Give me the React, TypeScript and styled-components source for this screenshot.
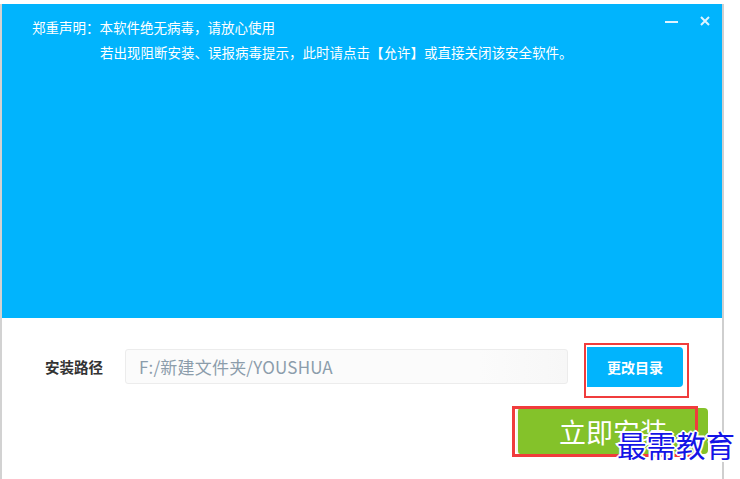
import React from 'react';
import styled, { createGlobalStyle } from 'styled-components';

const GlobalStyle = createGlobalStyle`
  html, body {
    margin: 0;
    padding: 0;
    background: #ffffff;
  }
  body {
    font-family: "Noto Sans CJK SC", "Noto Sans", sans-serif;
  }
`;

const Page = styled.div`
  position: relative;
  width: 740px;
  height: 479px;
  padding-top: 4px;
  box-sizing: border-box;
  overflow: hidden;
  background: #ffffff;
`;

const Window = styled.div`
  width: 724px;
  height: 475px;
  box-sizing: border-box;
  border-left: 2px solid #d2d2d2;
  border-right: 2px solid #cfcfcf;
  display: flex;
  flex-direction: column;
`;

const Header = styled.div`
  height: 314px;
  background: #01b4fd;
  display: flex;
  align-items: flex-start;
`;

const Notice = styled.div`
  flex: 1;
  padding: 11px 0 0 30px;
  color: #ffffff;
  font-size: 13.5px;
  line-height: 25px;
`;

const NoticeLine = styled.div<{ indent?: boolean }>`
  white-space: nowrap;
  padding-left: ${(props) => (props.indent ? '68px' : '0')};
`;

const WindowControls = styled.div`
  display: flex;
  align-items: center;
  gap: 20px;
  padding: 10px 11px 0 0;
`;

const ControlButton = styled.div`
  width: 13px;
  height: 14px;
  display: flex;
  align-items: center;
  justify-content: center;
`;

const Body = styled.div`
  flex: 1;
  display: flex;
  flex-direction: column;
  padding: 25px 14px 0 43px;
`;

const PathRow = styled.div`
  display: flex;
  align-items: flex-start;
`;

const PathLabel = styled.div`
  margin-top: 14px;
  width: 59px;
  margin-right: 21px;
  font-size: 14.5px;
  line-height: 20px;
  font-weight: bold;
  color: #333333;
  white-space: nowrap;
`;

const PathInput = styled.div`
  margin-top: 6px;
  width: 443px;
  height: 35px;
  box-sizing: border-box;
  border: 1px solid #ececec;
  border-radius: 3px;
  background: linear-gradient(to right, #fbfbfb 80%, #f7f7f7);
  padding-left: 13px;
  display: flex;
  align-items: center;
  color: #8c9dab;
  font-size: 17px;
  letter-spacing: 0.2px;
  white-space: nowrap;
`;

const Highlight = styled.div`
  margin-left: 16px;
  border: 2px solid #f03c3c;
  padding: 2px 4px 9px 1px;
`;

const ChangeButton = styled.div`
  width: 96px;
  height: 40px;
  background: #01b4fd;
  border-radius: 0 4px 4px 0;
  color: #ffffff;
  font-size: 14px;
  font-weight: bold;
  display: flex;
  align-items: center;
  justify-content: center;
`;

const InstallRow = styled.div`
  display: flex;
  justify-content: flex-end;
  margin-top: 10px;
`;

const InstallButton = styled.div`
  position: relative;
  width: 192px;
  height: 46px;
  box-sizing: border-box;
  background: #84c22a;
  border-left: 2px solid #f4f8ee;
  border-radius: 4px;
  color: #ffffff;
  font-size: 27px;
  display: flex;
  align-items: center;
  justify-content: center;

  &::after {
    content: '';
    position: absolute;
    left: -6px;
    top: -2px;
    right: 10px;
    bottom: -3px;
    border: 3px solid #f03c3c;
  }
`;

const Watermark = styled.div`
  position: absolute;
  left: 617px;
  top: 424px;
  color: #1414e6;
  font-size: 29.5px;
  line-height: 40px;
  font-family: "Noto Sans CJK SC", serif;
  white-space: nowrap;
  text-shadow:
    -1px -1px 0 #fff, 1px -1px 0 #fff, -1px 1px 0 #fff, 1px 1px 0 #fff,
    0 -2px 0 #fff, 0 2px 0 #fff, -2px 0 0 #fff, 2px 0 0 #fff;
`;

const App: React.FunctionComponent = () => {
  return (
    <Page>
      <GlobalStyle />
      <Window>
        <Header>
          <Notice>
            <NoticeLine>郑重声明：本软件绝无病毒，请放心使用</NoticeLine>
            <NoticeLine indent>
              若出现阻断安装、误报病毒提示，此时请点击【允许】或直接关闭该安全软件。
            </NoticeLine>
          </Notice>
          <WindowControls>
            <ControlButton>
              <svg width="13" height="14" viewBox="0 0 13 14">
                <rect x="0" y="7" width="13" height="2" fill="#dff3ff" />
              </svg>
            </ControlButton>
            <ControlButton>
              <svg width="10" height="10" viewBox="0 0 10 10">
                <path d="M1 1 L9 9 M9 1 L1 9" stroke="#dff3ff" strokeWidth="2" />
              </svg>
            </ControlButton>
          </WindowControls>
        </Header>
        <Body>
          <PathRow>
            <PathLabel>安装路径</PathLabel>
            <PathInput>F:/新建文件夹/YOUSHUA</PathInput>
            <Highlight>
              <ChangeButton>更改目录</ChangeButton>
            </Highlight>
          </PathRow>
          <InstallRow>
            <InstallButton>立即安装</InstallButton>
          </InstallRow>
        </Body>
      </Window>
      <Watermark>最需教育</Watermark>
    </Page>
  );
};

export default App;
